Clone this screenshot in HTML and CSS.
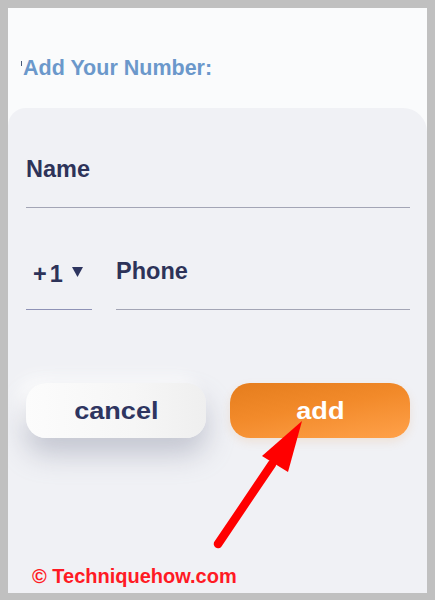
FILE: index.html
```html
<!DOCTYPE html>
<html lang="en">
<head>
<meta charset="utf-8">
<title>Add Your Number</title>
<link rel="stylesheet" href="styles.css">
</head>
<body>
<div class="frame">
  <header class="top">
    <h1 class="title"><span class="tick"></span>Add Your Number:</h1>
  </header>
  <section class="card">
    <div class="field name-field">
      <span class="label">Name</span>
    </div>
    <div class="phone-row">
      <div class="field code-field">
        <span class="code">+1</span>
        <svg class="caret" width="11" height="10" viewBox="0 0 11 10"><path d="M0 0 H11 L5.5 10 Z" fill="#2e3560"/></svg>
      </div>
      <div class="field phone-field">
        <span class="label">Phone</span>
      </div>
    </div>
    <div class="buttons">
      <button class="btn cancel"><span class="btn-text">cancel</span></button>
      <button class="btn add"><span class="btn-text">add</span></button>
    </div>
  </section>
  <svg class="arrow" width="419" height="585" viewBox="0 0 419 585">
    <path d="M210 536 L264 456" stroke="#ff0000" stroke-width="8.5" stroke-linecap="round" fill="none"/>
    <path d="M294 413 L254 448 L280 464 Z" fill="#ff0000"/>
  </svg>
  <div class="watermark">© Techniquehow.com</div>
</div>
</body>
</html>
```

FILE: styles.css
```css
* { box-sizing: border-box; }

html, body {
  margin: 0;
  padding: 0;
  background: #c0c0c0;
}

body {
  width: 435px;
  height: 600px;
  overflow: hidden;
  font-family: "Liberation Sans", Arial, sans-serif;
}

.frame {
  position: relative;
  margin: 8px 8px 7px 8px;
  width: 419px;
  height: 585px;
  background: #fafbfc;
  display: flex;
  flex-direction: column;
  overflow: hidden;
}

.top {
  height: 100px;
  flex: 0 0 100px;
  padding-top: 47px;
}

.title {
  margin: 0;
  padding-left: 13px;
  font-size: 21.5px;
  line-height: 26px;
  font-weight: bold;
  color: #6b98cb;
  display: flex;
  align-items: flex-start;
}

.tick {
  width: 1px;
  height: 5px;
  margin-top: 6px;
  margin-right: 1px;
  background: #4a5a78;
}

.card {
  flex: 1;
  background: #f0f1f5;
  border-radius: 18px 24px 0 0;
  padding: 48px 17px 0 18px;
  display: flex;
  flex-direction: column;
}

.field {
  padding-bottom: 25px;
  border-bottom: 1.5px solid #a3a5b5;
  color: #2d3359;
  font-size: 23.5px;
  line-height: 26px;
  font-weight: bold;
}

.label { display: block; }

.phone-row {
  display: flex;
  gap: 24px;
  margin-top: 50px;
}

.code-field {
  width: 66px;
  flex: 0 0 66px;
  padding-left: 7px;
  display: flex;
  align-items: baseline;
  border-bottom-color: #8e92b6;
}

.code {
  letter-spacing: 3px;
  transform: translateY(3px);
}

.caret {
  margin-left: 6px;
  transform: translateY(-2px);
}

.phone-field { flex: 1; }

.buttons {
  display: flex;
  gap: 24px;
  margin-top: 73px;
}

.btn {
  width: 180px;
  height: 55px;
  border: none;
  border-radius: 20px;
  font-family: "Liberation Sans", Arial, sans-serif;
  font-size: 24px;
  font-weight: bold;
  padding: 0;
  display: flex;
  align-items: center;
  justify-content: center;
}

.btn-text {
  display: inline-block;
  transform: scaleX(1.13);
}

.cancel {
  background: linear-gradient(90deg, #fcfcfc 0%, #f6f6f6 60%, #efefef 100%);
  color: #2e3560;
  box-shadow: 0 16px 28px rgba(140, 145, 165, 0.45), -8px -6px 16px rgba(255, 255, 255, 0.9);
}

.add {
  background: linear-gradient(170deg, #e57d1d 0%, #f28a2a 45%, #ffa14a 100%);
  color: #ffffff;
  box-shadow: 0 4px 10px rgba(230, 140, 60, 0.15);
}

.arrow {
  position: absolute;
  left: 0;
  top: 0;
  pointer-events: none;
}

.watermark {
  position: absolute;
  left: 24px;
  top: 556px;
  font-family: "Liberation Sans", Arial, sans-serif;
  font-weight: bold;
  font-size: 20px;
  line-height: 24px;
  color: #ff1a24;
}
```
